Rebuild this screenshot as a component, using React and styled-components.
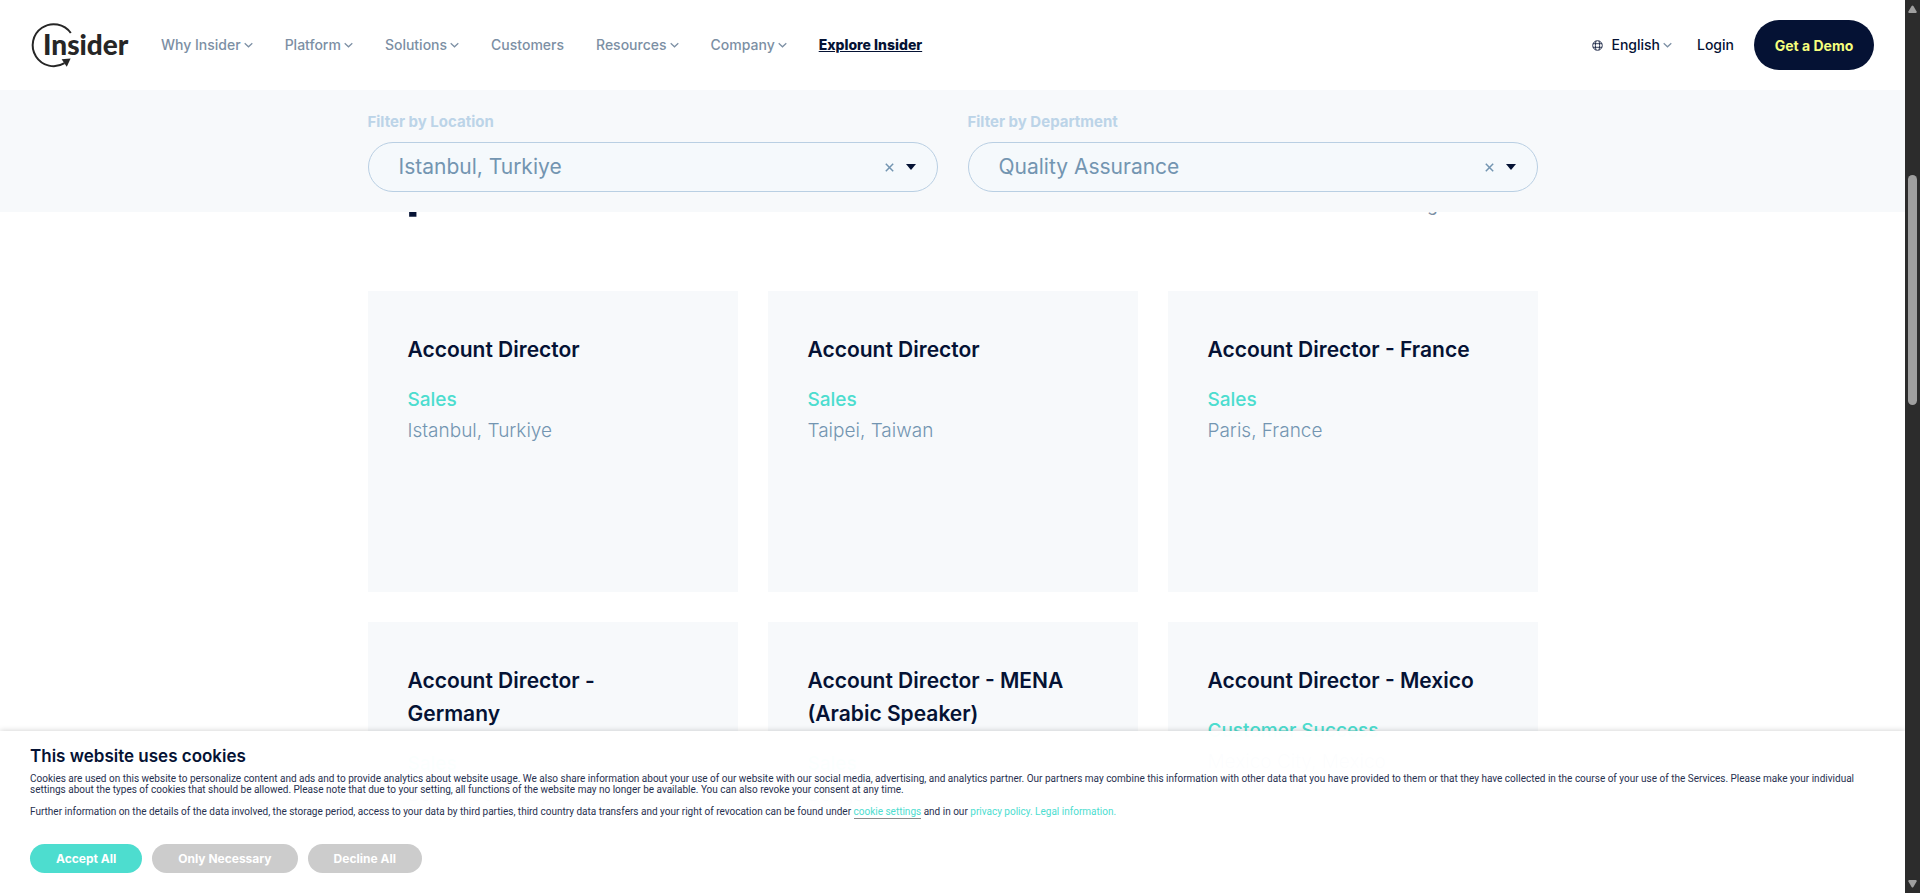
import React from 'react';
import styled, { createGlobalStyle } from 'styled-components';

const NAVY = '#051234';
const TEAL = '#4dddcf';
const SLATE = '#7c8fa4';
const STEEL = '#7395b1';

const GlobalStyle = createGlobalStyle`
  *, *::before, *::after { box-sizing: border-box; }
  body {
    margin: 0;
    background: #fff;
    color: ${NAVY};
    font-family: Inter, "Liberation Sans", sans-serif;
    overflow: hidden;
  }
  a { color: inherit; text-decoration: none; }
  button, select { font-family: inherit; cursor: pointer; }
`;

const Shell = styled.div`
  display: grid;
  grid-template-columns: minmax(0, 1fr) 15px;
  height: 100vh;
`;

const Page = styled.div`
  position: relative;
  height: 100vh;
  overflow: hidden;
`;

const TopStack = styled.div`
  position: relative;
  z-index: 2;
`;

const Header = styled.header`
  display: flex;
  align-items: center;
  height: 90px;
  padding: 0 31px 0 30px;
  background: #fff;
`;

const LogoLink = styled.a`
  display: block;
  margin-right: 31px;
  svg { display: block; }
`;

const LogoText = styled.text`
  font-family: Lato, sans-serif;
  font-size: 28px;
  font-weight: 900;
`;

const Nav = styled.nav`
  display: flex;
  gap: 32px;
  flex: 1;
`;

const NavLink = styled.a`
  display: flex;
  align-items: center;
  gap: 3px;
  font-size: 14px;
  line-height: 20px;
  white-space: nowrap;
  font-weight: ${(p) => (p.$active ? 800 : 500)};
  color: ${(p) => (p.$dark || p.$active ? NAVY : SLATE)};
  text-decoration: ${(p) => (p.$active ? 'underline' : 'none')};
`;

const Tools = styled.div`
  display: flex;
  align-items: center;
  gap: 25px;
`;

const Account = styled.div`
  display: flex;
  align-items: center;
  gap: 20px;
`;

const Language = styled.div`
  display: flex;
  align-items: center;
  gap: 8px;
`;

const DemoButton = styled.button`
  width: 120px;
  height: 50px;
  padding: 0;
  border: 0;
  border-radius: 25px;
  background: ${NAVY};
  color: #f6ff7d;
  font-size: 14px;
  font-weight: 700;
`;

const FilterBar = styled.section`
  padding: 20px 0;
  background: #f7f9fb;
`;

const Container = styled.div`
  width: 100%;
  max-width: 1170px;
  margin: 0 auto;
`;

const FilterGrid = styled(Container)`
  display: grid;
  grid-template-columns: 1fr 1fr;
  gap: 30px;
`;

const FilterLabel = styled.label`
  display: block;
  margin-bottom: 8px;
  color: #bcd4e8;
  font-size: 15px;
  font-weight: 700;
  line-height: 24px;
`;

const SelectBox = styled.div`
  position: relative;
`;

const Select = styled.select`
  display: block;
  width: 100%;
  height: 50px;
  padding: 0 60px 2px 30px;
  border: 1px solid #b9cfe3;
  border-radius: 25px;
  background: #f5f9fc;
  color: ${STEEL};
  font-size: 21px;
  appearance: none;
`;

const SelectMarks = styled.div`
  position: absolute;
  top: 0;
  right: 22px;
  bottom: 0;
  display: flex;
  align-items: center;
  gap: 12px;
  pointer-events: none;
  svg { display: block; }
`;

const ClearButton = styled.button`
  padding: 0;
  border: 0;
  background: none;
  pointer-events: auto;
`;

const Positions = styled.main`
  margin-top: -52px;
`;

const PositionsHead = styled(Container)`
  display: flex;
  align-items: flex-end;
  justify-content: space-between;
  margin-bottom: 73px;
`;

const PositionsTitle = styled.h2`
  margin: 0;
  font-size: 50px;
  font-weight: 700;
  line-height: 58px;
`;

const ResultCount = styled.p`
  margin: 0;
  color: ${SLATE};
  font-size: 17px;
  line-height: 26px;
`;

const CardGrid = styled(Container)`
  display: grid;
  grid-template-columns: repeat(3, 1fr);
  gap: 30px;
`;

const Card = styled.article`
  height: 301px;
  padding: 42px 36px 36px 40px;
  background: #f7f9fb;
`;

const CardTitle = styled.h3`
  margin: 0 0 18px;
  font-size: 21px;
  font-weight: 600;
  line-height: 33px;
  white-space: pre-line;
`;

const Department = styled.p`
  margin: 0;
  color: ${TEAL};
  font-size: 19px;
  font-weight: 500;
  line-height: 31px;
`;

const Place = styled.p`
  margin: 0;
  color: ${STEEL};
  font-size: 19px;
  font-weight: 300;
  line-height: 31px;
`;

const CookieBanner = styled.section`
  position: absolute;
  z-index: 3;
  left: 0;
  right: 0;
  bottom: 0;
  padding: 13px 30px 20px;
  background: rgba(255, 255, 255, 0.98);
  box-shadow: 0 0 6px rgba(0, 0, 0, 0.2);
`;

const CookieTitle = styled.h2`
  margin: 0 0 5px;
  font-size: 17px;
  font-weight: 600;
  line-height: 24px;
`;

const CookieText = styled.p`
  margin: 0 0 11px;
  color: #27304f;
  font-family: Roboto, "Liberation Sans", sans-serif;
  font-size: 10px;
  line-height: 11px;
`;

const CookieLink = styled.a`
  && { color: ${TEAL}; }
  padding-bottom: 1px;
  border-bottom: ${(p) => (p.$lined ? '1px solid #8a8a8a' : '0')};
`;

const CookieActions = styled.div`
  display: flex;
  gap: 10px;
  margin-top: 27px;
`;

const CookieButton = styled.button`
  height: 29px;
  padding: 0 26px;
  border: 0;
  border-radius: 15px;
  background: ${(p) => (p.$primary ? TEAL : '#ccc')};
  color: #fff;
  font-size: 12px;
  font-weight: 700;
`;

const ScrollTrack = styled.div`
  display: flex;
  flex-direction: column;
  align-items: center;
  padding: 5px 0;
  background: #2c2c2c;
  svg { display: block; }
`;

const ScrollThumb = styled.div`
  width: 9px;
  height: 26%;
  margin-top: 162px;
  margin-bottom: auto;
  border-radius: 5px;
  background: #9f9f9f;
`;

const Chevron = () => (
  <svg width="9" height="6" viewBox="0 0 9 6" fill="none" stroke={SLATE} strokeWidth="1.2" aria-hidden="true">
    <path d="M0.7 1.2 4.5 4.8 8.3 1.2" />
  </svg>
);

const Globe = () => (
  <svg width="11" height="11" viewBox="0 0 11 11" fill="none" stroke={NAVY} strokeWidth="0.8" aria-hidden="true">
    <circle cx="5.5" cy="5.5" r="4.8" />
    <path d="M4 0.9C3.2 3.8 3.2 7.2 4 10.1M7 0.9C7.8 3.8 7.8 7.2 7 10.1M1 3.7H10M1 7.3H10" />
  </svg>
);

const Logo = () => (
  <svg width="100" height="50" viewBox="0 0 100 50" fill="#262626" role="img" aria-label="Insider">
    <path d="M40.8 13A21 21 0 1 0 34.5 43.2" fill="none" stroke="#262626" strokeWidth="2" />
    <path d="M31.6 39.3 40.6 38.4 36.8 46.8Z" />
    <LogoText x="13" y="35">Insider</LogoText>
  </svg>
);

const ScrollArrow = ({ down }) => (
  <svg width="9" height="8" viewBox="0 0 9 8" fill="#9f9f9f">
    <path d={down ? 'M1 0H8Q9 0.4 8.6 1.6L5.4 7Q4.5 8 3.6 7L0.4 1.6Q0 0.4 1 0Z' : 'M1 8H8Q9 7.6 8.6 6.4L5.4 1Q4.5 0 3.6 1L0.4 6.4Q0 7.6 1 8Z'} />
  </svg>
);

const NAV_ITEMS = [
  { label: 'Why Insider', menu: true },
  { label: 'Platform', menu: true },
  { label: 'Solutions', menu: true },
  { label: 'Customers' },
  { label: 'Resources', menu: true },
  { label: 'Company', menu: true },
  { label: 'Explore Insider', active: true },
];

const JOBS = [
  { title: 'Account Director', department: 'Sales', place: 'Istanbul, Turkiye' },
  { title: 'Account Director', department: 'Sales', place: 'Taipei, Taiwan' },
  { title: 'Account Director - France', department: 'Sales', place: 'Paris, France' },
  { title: 'Account Director -\nGermany', department: 'Sales', place: 'Berlin, Germany' },
  { title: 'Account Director - MENA\n(Arabic Speaker)', department: 'Sales', place: 'Bengaluru' },
  { title: 'Account Director - Mexico', department: 'Customer Success', place: 'Mexico City, Mexico' },
];

const Filter = ({ id, label, value }) => (
  <div>
    <FilterLabel htmlFor={id}>{label}</FilterLabel>
    <SelectBox>
      <Select id={id} defaultValue={value}>
        <option>{value}</option>
      </Select>
      <SelectMarks>
        <ClearButton type="button" aria-label={`Clear ${label}`}>
          <svg width="9" height="9" viewBox="0 0 9 9" stroke={STEEL} strokeWidth="1.5">
            <path d="M0.8 0.8 8.2 8.2M8.2 0.8 0.8 8.2" />
          </svg>
        </ClearButton>
        <svg width="10" height="6" viewBox="0 0 10 6" fill={NAVY}>
          <path d="M0 0H10L5 6Z" />
        </svg>
      </SelectMarks>
    </SelectBox>
  </div>
);

export default function App() {
  return (
    <Shell>
      <GlobalStyle />
      <Page>
        <TopStack>
          <Header>
            <LogoLink href="#home">
              <Logo />
            </LogoLink>
            <Nav>
              {NAV_ITEMS.map((item) => (
                <NavLink key={item.label} href="#nav" $active={item.active}>
                  {item.label}
                  {item.menu && <Chevron />}
                </NavLink>
              ))}
            </Nav>
            <Tools>
              <Language>
                <Globe />
                <NavLink href="#language" $dark>
                  English
                  <Chevron />
                </NavLink>
              </Language>
              <Account>
                <NavLink href="#login" $dark>Login</NavLink>
                <DemoButton type="button">Get a Demo</DemoButton>
              </Account>
            </Tools>
          </Header>
          <FilterBar>
            <FilterGrid>
              <Filter id="location" label="Filter by Location" value="Istanbul, Turkiye" />
              <Filter id="department" label="Filter by Department" value="Quality Assurance" />
            </FilterGrid>
          </FilterBar>
        </TopStack>

        <Positions>
          <PositionsHead>
            <PositionsTitle>Open Positions</PositionsTitle>
            <ResultCount>Showing 1 – 12 of 178</ResultCount>
          </PositionsHead>
          <CardGrid>
            {JOBS.map((job, index) => (
              <Card key={index}>
                <CardTitle>{job.title}</CardTitle>
                <Department>{job.department}</Department>
                <Place>{job.place}</Place>
              </Card>
            ))}
          </CardGrid>
        </Positions>

        <CookieBanner aria-label="Cookie consent">
          <CookieTitle>This website uses cookies</CookieTitle>
          <CookieText>
            Cookies are used on this website to personalize content and ads and to provide analytics about website
            usage. We also share information about your use of our website with our social media, advertising, and
            analytics partner. Our partners may combine this information with other data that you have provided to
            them or that they have collected in the course of your use of the Services. Please make your individual
            settings about the types of cookies that should be allowed. Please note that due to your setting, all
            functions of the website may no longer be available. You can also revoke your consent at any time.
          </CookieText>
          <CookieText>
            Further information on the details of the data involved, the storage period, access to your data by third
            parties, third country data transfers and your right of revocation can be found under{' '}
            <CookieLink href="#settings" $lined>cookie settings</CookieLink> and in our{' '}
            <CookieLink href="#privacy">privacy policy.</CookieLink>{' '}
            <CookieLink href="#legal">Legal information.</CookieLink>
          </CookieText>
          <CookieActions>
            <CookieButton type="button" $primary>Accept All</CookieButton>
            <CookieButton type="button">Only Necessary</CookieButton>
            <CookieButton type="button">Decline All</CookieButton>
          </CookieActions>
        </CookieBanner>
      </Page>
      <ScrollTrack aria-hidden="true">
        <ScrollArrow />
        <ScrollThumb />
        <ScrollArrow down />
      </ScrollTrack>
    </Shell>
  );
}
